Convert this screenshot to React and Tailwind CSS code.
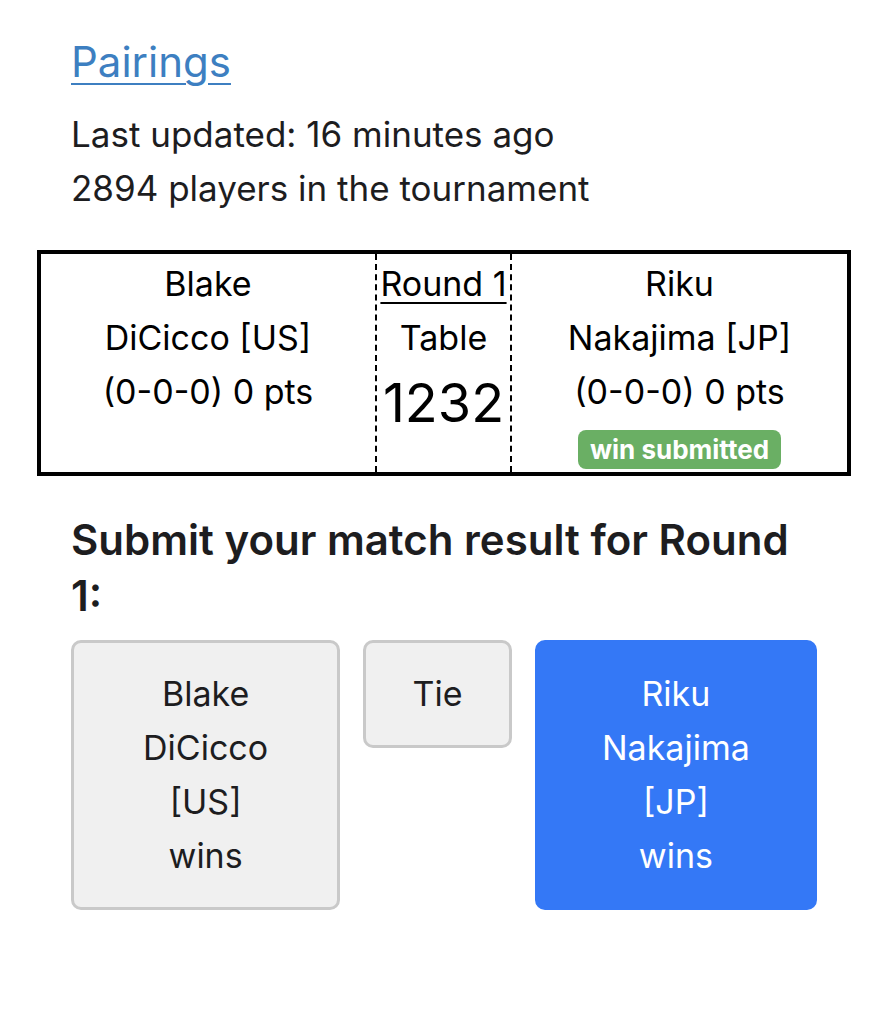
import React from 'react';

const font = { fontFamily: 'Inter, "Noto Sans", sans-serif' };

const Player = ({ first, last, record, badge }) => (
  <div className="flex flex-col items-center pt-[3px] text-center text-[34px] leading-[54px] text-black">
    <div>{first}</div>
    <div>{last}</div>
    <div>{record}</div>
    {badge && (
      <div className="mt-[11px] mb-[3px] rounded-[8px] bg-[#6aaf64] px-[12px] text-[26px] font-bold leading-[39px] text-white">
        {badge}
      </div>
    )}
  </div>
);

export default function App() {
  return (
    <div className="min-h-[1024px] w-[888px] bg-white text-[#1d1d1f]" style={font}>
      <div className="px-[71px] pt-[34px]">
        <a href="#" className="text-[42px] leading-[56px] text-[#3d7fc1] underline decoration-2 underline-offset-[6px]">
          Pairings
        </a>
        <div className="mt-[17px] text-[35px] leading-[54px]">
          <div>Last updated: 16 minutes ago</div>
          <div>2894 players in the tournament</div>
        </div>
      </div>

      <div className="mx-[37px] mt-[35px] grid grid-cols-[334px_137px_1fr] border-[4px] border-black">
        <Player first="Blake" last="DiCicco [US]" record="(0-0-0) 0 pts" />
        <div className="flex flex-col items-center border-x-2 border-dashed border-black pt-[3px] text-center text-black">
          <a href="#" className="text-[34px] leading-[54px] text-black underline decoration-2 underline-offset-[6px]">
            Round 1
          </a>
          <div className="text-[34px] leading-[54px]">Table</div>
          <div className="text-[54px] leading-[76px]">1232</div>
        </div>
        <Player first="Riku" last="Nakajima [JP]" record="(0-0-0) 0 pts" badge="win submitted" />
      </div>

      <div className="px-[71px]">
        <h2 className="mt-[36px] w-[740px] text-[42px] font-semibold leading-[56px] text-[#1d1d1f]">
          Submit your match result for Round 1:
        </h2>
        <div className="mt-[16px] flex items-start gap-[23px]">
          <button className="w-[270px] rounded-[10px] border-[3px] border-[#c9c9c9] bg-[#f0f0f0] py-[24px] text-[34px] leading-[54px] text-[#1d1d1f]">
            Blake<br />DiCicco<br />[US]<br />wins
          </button>
          <button className="w-[149px] rounded-[10px] border-[3px] border-[#c9c9c9] bg-[#f0f0f0] py-[24px] text-[34px] leading-[54px] text-[#1d1d1f]">
            Tie
          </button>
          <button className="w-[283px] rounded-[10px] border-[3px] border-[#3478f6] bg-[#3478f6] py-[24px] text-[34px] leading-[54px] text-white">
            Riku<br />Nakajima<br />[JP]<br />wins
          </button>
        </div>
      </div>
    </div>
  );
}
